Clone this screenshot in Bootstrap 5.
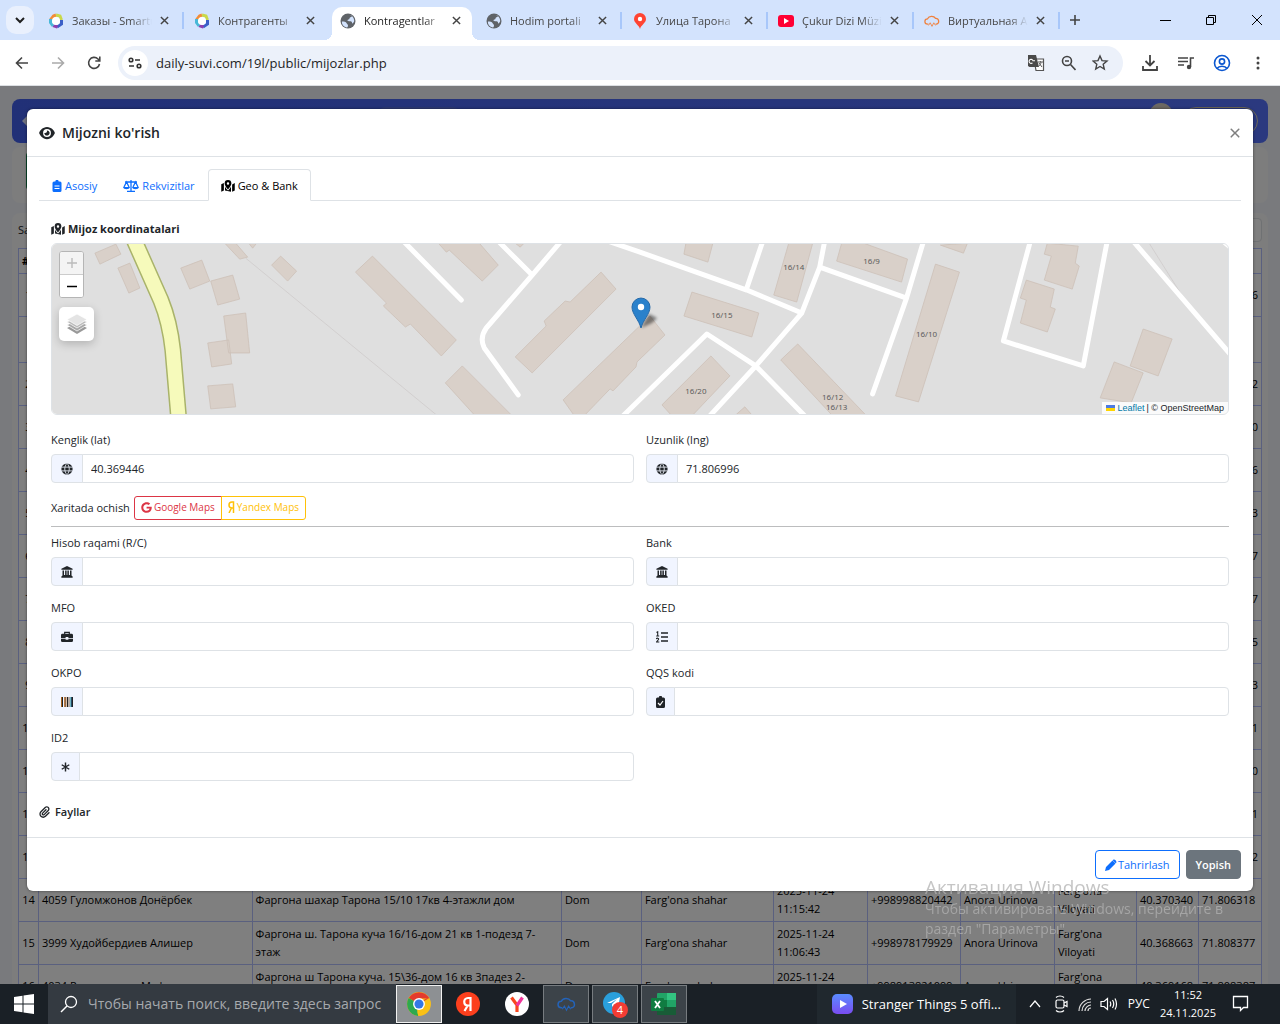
<!DOCTYPE html>
<html lang="uz">
<head>
<meta charset="utf-8">
<meta name="viewport" content="width=device-width, initial-scale=1">
<title>Kontragentlar</title>
<link href="https://cdn.jsdelivr.net/npm/bootstrap@5.3.0/dist/css/bootstrap.min.css" rel="stylesheet">
<style>
:root{--ui:"Open Sans","Noto Sans",sans-serif}
body{font-family:var(--ui);font-size:11px;line-height:18px;height:100vh;color:#212529}
svg{display:block;flex:none}
button{font-family:inherit}
/* browser frame */
.tabstrip{background:#d3e3fd;height:40px;padding:0 0 0 6px}
.tabmenu{width:28px;height:28px;border-radius:10px;background:#e9f0fd;border:0;padding:0}
.btab{flex:0 1 146px;min-width:0;height:33px;margin-top:7px;padding:0 15px 6px 10px;color:#474747;position:relative}
.btab a{color:inherit;text-decoration:none;white-space:nowrap;overflow:hidden;flex:1;margin:0 8px;-webkit-mask-image:linear-gradient(90deg,#000 75%,transparent)}
.btab button,.plainbtn{border:0;background:none;padding:0;color:#444}
.btab.sep::after{content:"";position:absolute;right:0;top:5px;width:2px;height:17px;background:#a8c7fa}
.btab.on{background:#fff;color:#1f1f1f;border-radius:10px 10px 0 0;flex-basis:140px;margin-right:4px;padding-right:11px;padding-left:8px;margin-left:2px}
.btab.on::before,.btab.on i{content:"";position:absolute;bottom:0;width:8px;height:8px}
.btab.on::before{left:-8px;background:radial-gradient(circle at 0 0,transparent 8px,#fff 8px)}
.btab.on i{right:-8px;background:radial-gradient(circle at 100% 0,transparent 8px,#fff 8px)}
.winbtns{gap:34px;padding-right:17px}
.toolbar-row{height:46px;background:#fff;border-bottom:1px solid #dcdfe3;padding:0 13px 0 12px}
.toolbar-end{gap:18px;padding-left:18px}
.omni{background:#ecf1fa;border-radius:17px;height:34px;padding:0 14px 0 4px;margin-left:14px}
.omni input{border:0;background:none;flex:1;min-width:0;font-size:13px;color:#1f1f1f;padding:0 0 0 8px;outline:0}
.siteinfo{width:26px;height:26px;border-radius:50%;background:#fff;border:0;padding:0}
/* page under the dialog */
.pageview{background:#f3f5fa;overflow:hidden}
.topnav{height:44px;border-radius:8px;background:linear-gradient(90deg,#4361ee,#5673ff);margin:13px 12px 0;padding:0 10px}
.chip-a{width:80px;height:30px;border-radius:6px;background:#5a74e8}
.chip-b{width:26px;height:30px;border-radius:50%;background:#d8d0c4}
.chip-c{width:76px;height:28px;border-radius:14px;border:1px solid #d9cfae}
.panel-w{background:#fafafa;border-radius:8px;margin:4px 12px 0;padding:5px 6px}
.panel-list{margin-top:10px}
.searchline{height:24px;margin-bottom:6px}
.searchline .form-control{height:24px;min-height:0}
.greenbtn{width:90px;height:38px;background:#0f8a4f;border-radius:4px}
.grid-t{width:100%;table-layout:fixed;border-collapse:collapse;color:#000;background:#fff}
.grid-t td,.grid-t th{border:1px solid #b4c0ff;padding:3px;height:43px;line-height:18px;vertical-align:middle}
.grid-t th{height:25px}
.grid-t .gap td{height:46px}
.grid-t td:first-child{text-align:center;padding:0 2px}
/* dialog */
.modal-dialog.wide{max-width:none;margin:23px 27px}
.wide .modal-content{border:0;border-radius:6px;box-shadow:0 0 3px rgba(0,0,0,.5)}
.wide .modal-header{padding:12px;height:48px}
.wide .modal-title{font-size:14px;font-weight:600;line-height:22px;gap:7px}
.wide .btn-close{width:12px;height:12px;background-size:12px;padding:0;margin:0}
.wide .modal-body{padding:12px}
.wide .modal-footer{padding:12px;gap:6px}
.wide .modal-footer>*{margin:0}
.nav-tabs{--bs-nav-link-padding-x:12px;--bs-nav-link-padding-y:6px;--bs-nav-tabs-border-radius:4px}
.nav-tabs .nav-link{color:#0d6efd;gap:3px;height:32px;padding-top:7px;padding-bottom:5px}
.nav-tabs .nav-link.active{color:#000}
.geo{padding:20px 12px 0}
.geo h6{font-size:11px;font-weight:700;line-height:16px;margin:0 0 6px;gap:3px}
.mapbox{height:172px;border:1px solid #dee2e6;border-radius:6px;overflow:hidden;margin-bottom:16px}
.mapbox>svg{width:100%;height:100%}
.zoomer{left:7px;top:7px;width:25px;border:1px solid #b5b5b5;border-radius:3px;background:#fff}
.zoomer button{height:22px;border:0;background:#fff;padding:0;width:23px}
.zoomer button:first-child{background:#f4f4f4;color:#bbb;border-bottom:1px solid #ccc;height:23px}
.layersbtn{left:7px;top:63px;width:35px;height:34px;border:0;border-radius:5px;background:#fff;box-shadow:0 3px 10px rgba(0,0,0,.2);padding:0}
.attrib{right:0;bottom:0;background:rgba(255,255,255,.85);font:9px/12px "Liberation Sans",sans-serif;padding:0 4px;gap:2px}
.attrib a{color:#0078a8;text-decoration:none}
.fld{margin-bottom:13px}
.fld label{display:block;line-height:18px;margin-bottom:5px}
.fld .input-group-text{height:29px;padding:0 9px;background:#f1f5ff;border-color:#dee2e6;border-radius:4px}
.fld .form-control{height:29px;font-size:11px;padding:4px 8px;border-color:#dee2e6;border-radius:4px}
.geo .row{--bs-gutter-x:12px}
.maplinks .btn{font-size:10px;line-height:14px;padding:3px 6px 5px;gap:2px;border-radius:3px}
.btn-outline-warning{--bs-btn-color:#ffc107}
.geo hr{margin:6px 0 7px;opacity:.3}
.files-h{font-size:11px;font-weight:600;gap:5px;line-height:18px;margin:9px 0 4px}
.modal-footer .btn{font-size:11px;line-height:19px;padding:4px 9px;gap:1px;border-radius:4px}
.btn-secondary{--bs-btn-font-weight:600}
/* desktop */
.watermark{left:925px;bottom:85px;width:340px;z-index:1100;color:rgba(178,178,178,.75);pointer-events:none;font-size:14px;line-height:20px}
.watermark b{display:block;font-weight:400;font-size:19px;line-height:23px}
.taskbar{height:40px;background:#1a2026;color:#fff}
.startbtn{width:48px}
.seek{width:348px;background:#343a41;gap:10px;padding-left:12px}
.seek input{background:none;border:0;outline:0;color:#fff;font-size:14px;width:304px;padding:0}
.seek input::placeholder{color:#a6a9ad;opacity:1}
.tile{width:46px;height:38px;margin:1px 3px 1px 0;border:1px solid transparent;background:none;padding:0}
.tile.run{background:#3c4349;border-color:#777c80}
.tile.act{background:#8d9093;border-color:#f1f1f1}
.media{width:199px;background:#20282e;font-size:13px;padding-left:15px;gap:9px}
.tray{gap:6px;padding:0 30px 0 12px}
.lang{font-size:12px}
.chatico{margin-left:10px}
</style>
<script src="https://cdn.jsdelivr.net/npm/bootstrap@5.3.0/dist/js/bootstrap.bundle.min.js"></script>
</head>
<body class="d-flex flex-column overflow-hidden">

<svg width="0" height="0" class="position-absolute" aria-hidden="true">
  <symbol id="x" viewBox="0 0 10 10"><path d="M1 1l8 8M9 1L1 9" stroke="currentColor" stroke-width="1.6"/></symbol>
  <symbol id="earth" viewBox="0 0 16 16"><circle cx="8" cy="8" r="7.5" fill="#5f6368"/><path d="M2 8.500c2 0 4 0 4.500 1.500s1.500 1 1.500 2.500-1 2-1 2C4 14 1.500 11.500 2 8.500zM8 2c1 0 3 0 4 1.500-1 1-2.500.5-2.500 2S7.500 6 7.500 7.500 12 7 12 9.500s2-.5 2.200-1.500S13.500 1.500 8 2z" fill="#d3e3fd"/></symbol>
  <symbol id="ring" viewBox="0 0 16 16"><g fill="none" stroke-width="3"><path d="M2.500 7L5.500 3 8 2" stroke="#f28c38"/><path d="M8 2l4 1 1.500 4" stroke="#c9d94a"/><path d="M13.500 7v4L9 14" stroke="#3a5fc8"/><path d="M9.500 14L5 12.500" stroke="#8e3fb0"/><path d="M5 13L2.500 9.500V6" stroke="#48b8d8"/></g><circle cx="8" cy="8" r="4" fill="#fff"/></symbol>
  <symbol id="cloud" viewBox="0 0 18 16"><path d="M5 11.500H4a3 3 0 010-6 5 4.500 0 019-.5 3.300 3.300 0 011 6.500h-1" fill="none" stroke="currentColor" stroke-width="1.400"/><path d="M5 13l2-3 2 4 2-4 2 3" fill="none" stroke="currentColor"/></symbol>
  <symbol id="bank" viewBox="0 0 16 16"><path d="M8 0l7.500 3.500V5H.5V3.500zM2 6h2v6h1.500V6h2v6h1V6h2v6H12V6h2v6.500l1.500 1.500v1.500H.5V14L2 12.500z" fill="currentColor"/></symbol>
  <symbol id="globe" viewBox="0 0 16 16"><circle cx="8" cy="8" r="7.500" fill="currentColor"/><path d="M.5 5.500h15M.5 10.500h15M8 .5c-4 4-4 11 0 15M8 .5c4 4 4 11 0 15" fill="none" stroke="#f1f5ff" stroke-width="1.100"/></symbol>
  <symbol id="mappin" viewBox="0 0 18 16"><path d="M0 5.500L3.500 4v10L0 15.500zM14.500 6l3.500-2v10l-3.500 1.500zM5 9l2 3 2 2 2-2 2-3v6.500l-8-1.500z" fill="currentColor"/><path fill-rule="evenodd" d="M9 0a4.500 4.500 0 014.500 4.500C13.500 7 10 11.500 9 12.500 8 11.500 4.500 7 4.500 4.500A4.500 4.500 0 019 0zm0 3a1.600 1.600 0 100 3.200A1.600 1.600 0 009 3z" fill="currentColor"/></symbol>
  <symbol id="clip" viewBox="0 0 12 16"><path d="M2 2h1.800a2.200 2.200 0 014.400 0H10a2 2 0 012 2v10a2 2 0 01-2 2H2a2 2 0 01-2-2V4a2 2 0 012-2z" fill="currentColor"/></symbol>
</svg>

<header>
  <div class="tabstrip d-flex">
    <button class="tabmenu align-self-center me-1 d-flex align-items-center justify-content-center" aria-label="Tabs"><svg width="10" height="8"><path d="M1 2l4 4 4-4" fill="none" stroke="#1f1f1f" stroke-width="2"/></svg></button>
    <div class="btab sep d-flex align-items-center"><svg width="16" height="16"><use href="#ring"/></svg><a href="#">Заказы - Smartup</a><button aria-label="Close"><svg width="9" height="9"><use href="#x"/></svg></button></div>
    <div class="btab d-flex align-items-center"><svg width="16" height="16"><use href="#ring"/></svg><a href="#">Контрагенты</a><button aria-label="Close"><svg width="9" height="9"><use href="#x"/></svg></button></div>
    <div class="btab on d-flex align-items-center"><svg width="16" height="16"><use href="#earth"/></svg><a href="#">Kontragentlar</a><button aria-label="Close"><svg width="9" height="9"><use href="#x"/></svg></button><i></i></div>
    <div class="btab sep d-flex align-items-center"><svg width="16" height="16"><use href="#earth"/></svg><a href="#">Hodim portali</a><button aria-label="Close"><svg width="9" height="9"><use href="#x"/></svg></button></div>
    <div class="btab sep d-flex align-items-center"><svg width="16" height="16"><path d="M8 0a6 6 0 016 6c0 4-5 6-6 10C7 12 2 10 2 6a6 6 0 016-6z" fill="#f43"/><circle cx="8" cy="6" r="2.200" fill="#fff"/></svg><a href="#">Улица Тарона</a><button aria-label="Close"><svg width="9" height="9"><use href="#x"/></svg></button></div>
    <div class="btab sep d-flex align-items-center"><svg width="16" height="16"><rect y="2" width="16" height="12" rx="3" fill="#ff0033"/><path d="M6 5l5 3-5 3z" fill="#fff"/></svg><a href="#">Çukur Dizi Müzik</a><button aria-label="Close"><svg width="9" height="9"><use href="#x"/></svg></button></div>
    <div class="btab sep d-flex align-items-center"><svg width="16" height="16" color="#f0803c"><use href="#cloud"/></svg><a href="#">Виртуальная А</a><button aria-label="Close"><svg width="9" height="9"><use href="#x"/></svg></button></div>
    <button class="plainbtn ms-2 me-auto" aria-label="New tab"><svg width="14" height="14"><path d="M7 2v10M2 7h10" stroke="#444" stroke-width="1.600"/></svg></button>
    <div class="winbtns d-flex align-items-center">
      <button class="plainbtn" aria-label="Minimize"><svg width="11" height="11"><path d="M0 5.500h11" stroke="#000"/></svg></button>
      <button class="plainbtn" aria-label="Restore"><svg width="12" height="12"><path d="M1.500 3.500h7v7h-7zM3.500 3V1.500h7v7H9" fill="none" stroke="#000"/></svg></button>
      <button class="plainbtn" aria-label="Close window"><svg width="12" height="12"><path d="M1 1l10 10M11 1L1 11" stroke="#000"/></svg></button>
    </div>
  </div>
  <div class="toolbar-row d-flex align-items-center">
    <div class="d-flex gap-3">
      <button class="plainbtn" aria-label="Back"><svg width="20" height="20"><path d="M16 10H5M10 4.500L4.500 10l5.500 5.500" fill="none" stroke="#444" stroke-width="1.600"/></svg></button>
      <button class="plainbtn" aria-label="Forward"><svg width="20" height="20"><path d="M4 10h11M10 4.500l5.500 5.500-5.500 5.500" fill="none" stroke="#aaa" stroke-width="1.600"/></svg></button>
      <button class="plainbtn" aria-label="Reload"><svg width="20" height="20"><path d="M15.500 11a5.500 5.500 0 11-1.500-5l1.500 1.500M15.800 3.500V8h-4.500" fill="none" stroke="#444" stroke-width="1.600"/></svg></button>
    </div>
    <div class="omni d-flex align-items-center flex-fill">
      <button class="siteinfo d-flex align-items-center justify-content-center" aria-label="Site information"><svg width="14" height="12"><g fill="none" stroke="#333" stroke-width="1.600"><circle cx="3" cy="3" r="1.800"/><path d="M7 3h5M1 9h5"/><circle cx="11" cy="9" r="1.800"/></g></svg></button>
      <input aria-label="Address" value="daily-suvi.com/19l/public/mijozlar.php">
      <div class="d-flex gap-3">
        <svg width="18" height="18"><path d="M7 5h9.500v11.500H9z" fill="#fff" stroke="#555" stroke-width="1.200"/><path d="M1 1h8l3 12H2.500L1 12z" fill="#4a4a4a"/><path d="M8 6.800H6a2 2 0 10-.5 2" fill="none" stroke="#fff" stroke-width="1.100"/><path d="M11 8h5M13 7c2 2 0 4-1 5m0-3l3 4" fill="none" stroke="#555"/></svg>
        <svg width="15" height="18"><circle cx="6" cy="7" r="4.500" fill="none" stroke="#444" stroke-width="1.600"/><path d="M9.500 10.500L14.500 16M4 7h4" stroke="#444" stroke-width="1.600"/></svg>
        <svg width="17" height="18"><path d="M8 2l2 4.600 5 .4-3.800 3.300L12.300 15 8 12.500 3.700 15l1.100-4.700L1 7l5-.4z" fill="none" stroke="#444" stroke-width="1.400"/></svg>
      </div>
    </div>
    <div class="toolbar-end d-flex align-items-center">
      <svg width="18" height="18"><path d="M9 1v10M4.500 7L9 11.500 13.500 7M2 12v4h14v-4" fill="none" stroke="#444" stroke-width="1.800"/></svg>
      <svg width="18" height="18"><path d="M1 4h10M1 7.500h10M1 11h6M13.500 13V4H17" fill="none" stroke="#444" stroke-width="1.600"/><circle cx="12" cy="13" r="2.200" fill="#444"/></svg>
      <svg width="18" height="18"><g fill="none" stroke="#0b57d0" stroke-width="1.600"><circle cx="9" cy="9" r="7.500"/><circle cx="9" cy="7.500" r="2.600"/><path d="M4 14.500c2-3 8-3 10 0"/></g></svg>
      <svg width="18" height="18" fill="#444"><circle cx="9" cy="4" r="1.500"/><circle cx="9" cy="9" r="1.500"/><circle cx="9" cy="14" r="1.500"/></svg>
    </div>
  </div>
</header>

<main class="pageview flex-fill position-relative">
  <div class="topnav d-flex align-items-start">
    <svg class="align-self-center" width="12" height="12"><path d="M6 0L0 6l6 6 6-6z" fill="#dfe4ff"/></svg>
    <div class="chip-a ms-auto mt-2"></div><div class="ms-auto"></div><div class="ms-auto"></div>
    <div class="chip-b mt-1 me-2"></div><div class="chip-c mt-2"></div>
  </div>
  <div class="panel-w"><div class="greenbtn ms-2"></div><div class="pb-2"></div></div>
  <div class="panel-w panel-list">
    <div class="searchline d-flex align-items-center"><span>Sahifada</span><input class="form-control form-control-sm ms-auto w-25" aria-label="Qidirish"></div>
    <table class="grid-t">
      <colgroup><col style="width:20px"><col style="width:17.200%"><col style="width:24.900%"><col style="width:80px"><col style="width:132px"><col style="width:94px"><col style="width:93px"><col style="width:94px"><col style="width:82px"><col style="width:62px"><col style="width:63px"></colgroup>
      <tr><th>#</th><th colspan="9"></th><th></th></tr>
      <tr><td>1</td><td colspan="9"></td><td class="text-end">6</td></tr>
      <tr class="gap"><td></td><td colspan="9"></td><td></td></tr>
      <tr><td>2</td><td colspan="9"></td><td class="text-end">2</td></tr>
      <tr><td>3</td><td colspan="9"></td><td class="text-end">0</td></tr>
      <tr><td>4</td><td colspan="9"></td><td class="text-end">6</td></tr>
      <tr><td>5</td><td colspan="9"></td><td class="text-end">3</td></tr>
      <tr><td>6</td><td colspan="9"></td><td class="text-end">7</td></tr>
      <tr><td>7</td><td colspan="9"></td><td class="text-end">7</td></tr>
      <tr><td>8</td><td colspan="9"></td><td class="text-end">5</td></tr>
      <tr><td>9</td><td colspan="9"></td><td class="text-end">3</td></tr>
      <tr><td>10</td><td colspan="9"></td><td class="text-end">1</td></tr>
      <tr><td>11</td><td colspan="9"></td><td class="text-end">0</td></tr>
      <tr><td>12</td><td colspan="9"></td><td class="text-end">1</td></tr>
      <tr><td>13</td><td colspan="9"></td><td class="text-end">2</td></tr>
      <tr><td>14</td><td>4059 Гуломжонов Донёрбек</td><td>Фаргона шахар Тарона 15/10 17кв 4-этажли дом</td><td>Dom</td><td>Farg'ona shahar</td><td>2025-11-24<br>11:15:42</td><td>+998998820442</td><td>Anora Urinova</td><td>Farg'ona<br>Viloyati</td><td>40.370340</td><td>71.806318</td></tr>
      <tr><td>15</td><td>3999 Худойбердиев Алишер</td><td>Фаргона ш. Тарона куча 16/16-дом 21 кв 1-подезд 7-этаж</td><td>Dom</td><td>Farg'ona shahar</td><td>2025-11-24<br>11:06:43</td><td>+998978179929</td><td>Anora Urinova</td><td>Farg'ona<br>Viloyati</td><td>40.368663</td><td>71.808377</td></tr>
      <tr><td>16</td><td>4034 Рахимжонов Мафтуна</td><td>Фаргона ш Тарона куча. 15\36-дом 16 кв 3падез 2-<br>этаж</td><td>Dom</td><td>Farg'ona shahar</td><td>2025-11-24<br>11:02:10</td><td>+998913821099</td><td>Anora Urinova</td><td>Farg'ona<br>Viloyati</td><td>40.369168</td><td>71.808387</td></tr>
    </table>
  </div>

  <div class="modal-backdrop show position-absolute w-100 h-100"></div>
  <div class="modal show d-block position-absolute overflow-hidden" role="dialog" aria-labelledby="dlgTitle">
    <div class="modal-dialog wide">
      <div class="modal-content">
        <div class="modal-header">
          <h5 class="modal-title d-flex align-items-center mb-0" id="dlgTitle"><svg width="16" height="14" viewBox="0 0 576 512"><path fill="currentColor" d="M288 32c-80.800 0-145.500 36.800-192.600 80.600C48.600 156 17.300 208 2.500 243.700c-3.300 7.900-3.300 16.700 0 24.600C17.300 304 48.600 356 95.400 399.400C142.500 443.200 207.200 480 288 480s145.500-36.800 192.600-80.600c46.800-43.500 78.100-95.400 93-131.100c3.300-7.900 3.300-16.700 0-24.600c-14.900-35.700-46.200-87.700-93-131.100C433.500 68.800 368.800 32 288 32zM144 256a144 144 0 1 1 288 0 144 144 0 1 1 -288 0zm144-64c0 35.300-28.700 64-64 64c-7.100 0-13.900-1.200-20.300-3.300c-5.500-1.800-11.900 1.600-11.700 7.400c.3 6.900 1.300 13.800 3.200 20.700c13.700 51.200 66.400 81.600 117.600 67.900s81.600-66.400 67.900-117.600c-11.100-41.500-47.800-69.400-88.600-71.100c-5.800-.2-9.200 6.100-7.400 11.700c2.100 6.400 3.300 13.200 3.300 20.300z"/></svg>Mijozni ko'rish</h5>
          <button type="button" class="btn-close ms-auto" aria-label="Close"></button>
        </div>
        <div class="modal-body">
          <ul class="nav nav-tabs">
            <li class="nav-item"><a class="nav-link d-flex align-items-center" href="#"><svg width="10" height="12"><use href="#clip"/><path d="M2.500 6h5M2.500 8.500h5" stroke="#fff"/></svg>Asosiy</a></li>
            <li class="nav-item"><a class="nav-link d-flex align-items-center" href="#"><svg width="16" height="12" viewBox="0 0 16 12"><path d="M8 0v11M2 2h12M4 11.500h8M1 7l2.500-5L6 7M10 7l2.500-5L15 7" fill="none" stroke="currentColor" stroke-width="1.300"/><path d="M0 7h7c-.5 3-6.500 3-7 0zM9 7h7c-.5 3-6.500 3-7 0z" fill="currentColor"/></svg>Rekvizitlar</a></li>
            <li class="nav-item"><a class="nav-link active d-flex align-items-center" aria-current="page" href="#"><svg width="14" height="12"><use href="#mappin"/></svg>Geo &amp; Bank</a></li>
          </ul>
          <div class="geo">
            <h6 class="d-flex align-items-center"><svg width="14" height="12"><use href="#mappin"/></svg>Mijoz koordinatalari</h6>
            <div class="mapbox position-relative">
              <svg viewBox="51 243 1178 172" preserveAspectRatio="xMidYMid slice" role="img" aria-label="Xarita">
                <rect x="-949" y="-57" width="3178" height="772" fill="#dfdfdf"/>
                <path d="M245 258L436 415M1150 243l37 59" stroke="#d2cfcf" fill="none"/>
                <g fill="none"><path d="M132 237L160 300Q169 322 172 350L178 420" stroke="#a9b36a" stroke-width="17"/><path d="M132 237L160 300Q169 322 172 350L178 420" stroke="#f6fabb" stroke-width="14"/></g>
                <path fill="#d9d0c9" stroke="#cdc0b8" stroke-width=".8" d="M94 253L115 244 120 254 99 264zM117 268L129 263 139 288 128 293zM180 268L201 260 209 281 189 289zM210 281L232 275 239 299 217 305zM223 316L245 313 249 353 228 353zM207 343L228 340 231 364 211 367zM207 386L232 384 235 407 210 409zM224 243L235 243 247 257 239 259zM271 265L280 256 296 271 287 281zM248 243L256 243 252 248zM355 272L372 256 456 340 441 356 410 324 405 327 383 306 386 303zM438 243L479 243 498 265 482 281 449 250 446 252zM515 357L546 326 544 321 565 301 570 302 601 272 616 289 532 373zM563 400L650 316 665 335 637 362 636 367 613 391 610 389 583 417 575 417zM445 383L462 366 511 415 474 415zM515 243L524 243 520 247zM686 243L713 243 708 262 684 254zM789 243L813 243 797 302 774 295zM842 243L864 243 908 259 902 282 837 261zM941 245L968 243 964 253zM692 292L759 313 752 337 684 316zM936 264L960 272 919 402 896 396zM711 356L730 376 693 415 671 415 662 405zM781 360L798 344 866 415 832 415zM736 415L745 407 752 415zM1048 243L1079 246 1076 263 1080 266 1073 289 1045 280 1052 256 1045 254zM1027 280L1055 289 1051 307 1056 309 1048 332 1021 323 1027 300 1021 298zM1144 329L1173 339 1159 376 1131 366zM1115 362L1144 373 1132 403 1101 398z"/>
                <path fill="none" stroke="#fff" stroke-width="5" stroke-linecap="round" stroke-linejoin="round" d="M403 241L461 300M498 241L532 275M561 241L532 275 486 328Q479 338 484 348L518 395M608 241L640 252 747 290 802 313M763 241L747 288M825 241L820 267 802 313 756 366 709 417M820 267L907 298M924 241L907 298 873 394M622 417L707 334 756 366 806 417M1031 241L1004 341 1084 366 1108 241M1134 241L1231 354M1224 241L1230 246"/>
                <g fill="#5c5c5c" font-family="Noto Sans,sans-serif" font-size="8" text-anchor="middle"><text x="794" y="270">16/14</text><text x="872" y="264">16/9</text><text x="722" y="318">16/15</text><text x="927" y="337">16/10</text><text x="696" y="394">16/20</text><text x="833" y="400">16/12</text><text x="837" y="410">16/13</text></g>
                <defs><filter id="soft" x="-50%" y="-50%" width="200%" height="200%"><feGaussianBlur stdDeviation="1.500"/></filter></defs>
                <path d="M641 328L649 314 657 318 652 323z" fill="#000" opacity=".45" filter="url(#soft)"/>
                <path d="M641 328C639 320 632 314 632 307A9 9 0 01650 307C650 314 643 320 641 328z" fill="#2a81cb" stroke="#2468a8"/><circle cx="641" cy="307" r="3.200" fill="#fff"/>
              </svg>
              <div class="zoomer position-absolute d-flex flex-column overflow-hidden">
                <button type="button" aria-label="Zoom in"><svg class="mx-auto" width="12" height="12"><path d="M6 1v10M1 6h10" stroke="currentColor" stroke-width="1.400"/></svg></button>
                <button type="button" aria-label="Zoom out"><svg class="mx-auto" width="12" height="12"><path d="M1 6.500h10" stroke="#000" stroke-width="1.400"/></svg></button>
              </div>
              <button type="button" class="layersbtn position-absolute" aria-label="Layers"><svg class="mx-auto" width="22" height="22"><path d="M11 10l10 5-10 6-10-6z" fill="#999"/><path d="M11 7l10 5-10 6-10-6z" fill="#a8a8a8" stroke="#fff" stroke-width=".7"/><path d="M11 4l10 5-10 6L1 9z" fill="#bbb" stroke="#fff" stroke-width=".7"/><path d="M11 1l10 5.500-10 6L1 6.500z" fill="#e4e4e4" stroke="#fff" stroke-width=".7"/></svg></button>
              <div class="attrib position-absolute d-flex align-items-center"><svg width="9" height="6"><path fill="#4c7be1" d="M0 0h9v3H0z"/><path fill="#ffd500" d="M0 3h9v3H0z"/></svg><a href="#">Leaflet</a><span>| © OpenStreetMap</span></div>
            </div>
            <div class="row">
              <div class="col-6 fld"><label for="lat">Kenglik (lat)</label><div class="input-group"><span class="input-group-text"><svg width="12" height="12"><use href="#globe"/></svg></span><input id="lat" class="form-control" value="40.369446"></div></div>
              <div class="col-6 fld"><label for="lng">Uzunlik (lng)</label><div class="input-group"><span class="input-group-text"><svg width="12" height="12"><use href="#globe"/></svg></span><input id="lng" class="form-control" value="71.806996"></div></div>
            </div>
            <div class="maplinks d-flex align-items-center gap-1"><span>Xaritada ochish</span>
              <div class="btn-group">
                <a href="#" class="btn btn-outline-danger d-flex align-items-center"><svg width="11" height="11" viewBox="0 0 488 512"><path fill="currentColor" d="M488 261.800C488 403.300 391.100 504 248 504 110.800 504 0 393.200 0 256S110.800 8 248 8c66.800 0 123 24.500 166.300 64.900l-67.500 64.900C258.500 52.600 94.300 116.600 94.300 256c0 86.500 69.100 156.600 153.700 156.600 98.200 0 135-70.400 140.800-106.900H248v-85.300h236.100c2.300 12.700 3.900 24.900 3.900 41.400z"/></svg>Google Maps</a>
                <a href="#" class="btn btn-outline-warning d-flex align-items-center"><svg width="7" height="12"><path d="M5.500 12V1H4C0 1 0 7 4 7h1.500M3.500 7L1 12" fill="none" stroke="currentColor" stroke-width="1.500"/></svg>Yandex Maps</a>
              </div>
            </div>
            <hr>
            <div class="row">
              <div class="col-6 fld"><label for="acc">Hisob raqami (R/C)</label><div class="input-group"><span class="input-group-text"><svg width="12" height="12"><use href="#bank"/></svg></span><input id="acc" class="form-control"></div></div>
              <div class="col-6 fld"><label for="bankname">Bank</label><div class="input-group"><span class="input-group-text"><svg width="12" height="12"><use href="#bank"/></svg></span><input id="bankname" class="form-control"></div></div>
              <div class="col-6 fld"><label for="mfo">MFO</label><div class="input-group"><span class="input-group-text"><svg width="12" height="12" viewBox="0 0 13 12"><path d="M4 3V1h5v2" fill="none" stroke="currentColor" stroke-width="1.300"/><path d="M1.500 2.500h10A1.500 1.500 0 0113 4v3H8V6H5v1H0V4a1.500 1.500 0 011.500-1.500zM0 8h5v1h3V8h5v2a1.500 1.500 0 01-1.500 1.500h-10A1.500 1.500 0 010 10z" fill="currentColor"/></svg></span><input id="mfo" class="form-control"></div></div>
              <div class="col-6 fld"><label for="oked">OKED</label><div class="input-group"><span class="input-group-text"><svg width="12" height="12"><path d="M5 2h7M5 6h7M5 10h7" stroke="currentColor" stroke-width="1.300"/><path d="M.5 1.500l1.200-.7V5M.2 5h3M.3 8c.5-1.300 2.700-1 2.200.5L.5 11H3.300" fill="none" stroke="currentColor" stroke-width="1.100"/></svg></span><input id="oked" class="form-control"></div></div>
              <div class="col-6 fld"><label for="okpo">OKPO</label><div class="input-group"><span class="input-group-text"><svg width="12" height="12"><path d="M.5 1v10" stroke="#a8641e"/><path d="M1.500 1v10M6.500 1v10M11.500 1v10" stroke="#222"/><path d="M3.500 1v10M5 1v10" stroke="#d08a4a"/><path d="M4.300 1v10M8 1v10" stroke="#5a3a20" stroke-width=".8"/><path d="M9.500 1v10" stroke="#6fb5c0"/><path d="M10.500 1v10" stroke="#274a66"/></svg></span><input id="okpo" class="form-control"></div></div>
              <div class="col-6 fld"><label for="qqs">QQS kodi</label><div class="input-group"><span class="input-group-text"><svg width="9" height="12"><use href="#clip"/><path d="M2 7l2 2L7 5" fill="none" stroke="#fff" stroke-width="1.200"/></svg></span><input id="qqs" class="form-control"></div></div>
              <div class="col-6 fld"><label for="id2">ID2</label><div class="input-group"><span class="input-group-text"><svg width="9" height="12" viewBox="0 0 10 12"><path d="M5 1v10M.8 3.500l8.400 5M9.200 3.500l-8.400 5" stroke="currentColor" stroke-width="1.600"/></svg></span><input id="id2" class="form-control"></div></div>
            </div>
          </div>
          <h6 class="files-h d-flex align-items-center"><svg width="11" height="12" viewBox="0 0 448 512"><path fill="currentColor" d="M364.200 83.800c-24.400-24.400-64-24.400-88.400 0l-184 184c-42.100 42.100-42.100 110.300 0 152.400s110.300 42.100 152.400 0l152-152c10.900-10.900 28.700-10.900 39.600 0s10.900 28.700 0 39.600l-152 152c-64 64-167.600 64-231.600 0s-64-167.600 0-231.600l184-184c46.300-46.300 121.300-46.300 167.600 0s46.300 121.300 0 167.600l-176 176c-28.600 28.600-75 28.600-103.600 0s-28.600-75 0-103.600l144-144c10.900-10.900 28.700-10.900 39.600 0s10.900 28.700 0 39.600l-144 144c-6.700 6.700-6.700 17.700 0 24.400s17.700 6.700 24.400 0l176-176c24.400-24.400 24.400-64 0-88.400z"/></svg>Fayllar</h6>
        </div>
        <div class="modal-footer">
          <button type="button" class="btn btn-outline-primary d-flex align-items-center"><svg width="12" height="12"><path d="M0 12l1-4 6.500-6.500 3 3L4 11zM8.300.8c1-1.300 4 1.500 2.900 2.900l-.5.5-3-3z" fill="currentColor"/></svg>Tahrirlash</button>
          <button type="button" class="btn btn-secondary">Yopish</button>
        </div>
      </div>
    </div>
  </div>
</main>

<div class="watermark position-fixed"><b>Активация Windows</b>Чтобы активировать Windows, перейдите в<br>раздел "Параметры".</div>

<footer class="taskbar d-flex align-items-stretch">
  <button class="plainbtn startbtn d-flex align-items-center justify-content-center" aria-label="Start"><svg width="20" height="20" fill="#fff"><path d="M0 3l8.500-1.200V9.500H0zM9.500 1.600L20 0v9.500H9.500zM0 10.500h8.500v7.700L0 17zM9.500 10.500H20V20L9.500 18.400z"/></svg></button>
  <div class="seek d-flex align-items-center"><svg width="18" height="18"><circle cx="11" cy="7" r="5.500" fill="none" stroke="#fff" stroke-width="1.300"/><path d="M7 11l-6 6" stroke="#fff" stroke-width="1.500"/></svg><input aria-label="Search" placeholder="Чтобы начать поиск, введите здесь запрос"></div>
  <div class="d-flex">
    <button class="tile act" aria-label="Chrome"><svg class="mx-auto" width="26" height="26" viewBox="0 0 24 24"><circle cx="12" cy="12" r="11" fill="#fbc116"/><path d="M12 12L2.500 6.500a11 11 0 0119 0z" fill="#e33b2e"/><path d="M12 12L2.500 6.500A11 11 0 0011 23l5-9z" fill="#2da94f"/><path d="M12 7h9.800A11 11 0 0011.500 23l5-8.500z" fill="#fbc116"/><circle cx="12" cy="12" r="5.500" fill="#fff"/><circle cx="12" cy="12" r="4.200" fill="#3478e5"/></svg></button>
    <button class="tile" aria-label="Yandex"><svg class="mx-auto" width="24" height="24"><circle cx="12" cy="12" r="12" fill="#fc3f1d"/><path d="M14.500 19V6H12c-5 0-5 7.500 0 7.500h2.500M12 13l-3.500 6" fill="none" stroke="#fff" stroke-width="2.200"/></svg></button>
    <button class="tile" aria-label="Yandex Browser"><svg class="mx-auto" width="24" height="24"><circle cx="12" cy="12" r="12" fill="#fff"/><path d="M12 20v-7L6.500 5.500" fill="none" stroke="#f8461e" stroke-width="3.200"/><path d="M12 13.500L17.500 5.500" stroke="#f0359a" stroke-width="3.200"/></svg></button>
    <button class="tile run" aria-label="Cloud"><svg class="mx-auto" width="19" height="18" color="#2463b8"><use href="#cloud"/></svg></button>
    <button class="tile run" aria-label="Telegram"><svg class="mx-auto" width="28" height="28"><circle cx="13" cy="13" r="11" fill="#2a9fdc"/><path d="M6 13l13-6-2 11-4-3-2 2v-3l5-5-6 4z" fill="#fff"/><circle cx="19" cy="20" r="8" fill="#f23c34"/><text x="19" y="24" font-size="11" fill="#fff" text-anchor="middle">4</text></svg></button>
    <button class="tile run" aria-label="Excel"><svg class="mx-auto" width="26" height="24"><rect x="6" y="1" width="19" height="22" rx="1" fill="#21a366"/><path d="M16 1h9v7h-9z" fill="#33c481"/><path d="M6 8h10v7H6z" fill="#107c41"/><path d="M6 15h19v8H6z" fill="#185c37"/><path d="M16 8h9v7h-9z" fill="#21a366"/><rect y="6" width="13" height="13" rx="1" fill="#107c41"/><path d="M4 9l5 7M9 9l-5 7" stroke="#fff" stroke-width="1.800"/></svg></button>
  </div>
  <div class="media d-flex align-items-center ms-auto"><svg width="21" height="20"><defs><linearGradient id="mg" x2="0" y2="1"><stop stop-color="#5a8cff"/><stop offset="1" stop-color="#7a4cf0"/></linearGradient></defs><rect width="21" height="20" rx="5" fill="url(#mg)"/><path d="M8 6l7 4-7 4z" fill="#fff"/></svg><span class="text-nowrap">Stranger Things 5 offi...</span></div>
  <div class="tray d-flex align-items-center">
    <svg width="14" height="12"><path d="M2 9l5-6 5 6" fill="none" stroke="#fff" stroke-width="1.200"/></svg>
    <svg class="ms-1" width="18" height="18"><g fill="none" stroke="#fff" stroke-width="1.200"><rect x="4" y="5" width="8" height="8" rx="1.500"/><path d="M12 8l3-1.500v5L12 10M4 2.500c2-2 6-2 8 0M4 15.500c2 2 6 2 8 0"/></g></svg>
    <svg width="18" height="18"><g fill="none" stroke="#ddd" stroke-width="1.200"><path d="M3 16C3 9 9 4 15 4M6 16c0-5 4-9 9-9M9 16c0-3 3-6 6-6M12 16c0-2 1-3 3-3"/></g></svg>
    <svg width="18" height="18"><g fill="none" stroke="#fff" stroke-width="1.200"><path d="M1 6.500h3l3.500-3v11l-3.500-3H1zM10 6.500q1.500 2.500 0 5M12.500 5q2.500 4 0 8M15 3.500q3 5.500 0 11"/></g></svg>
    <span class="lang px-1">РУС</span>
    <div class="text-center">11:52<br>24.11.2025</div>
    <svg class="chatico" width="18" height="18"><path d="M1.500 1.500h14v11h-4l-3 3v-3h-7z" fill="none" stroke="#fff" stroke-width="1.300"/></svg>
  </div>
</footer>
</body>
</html>
